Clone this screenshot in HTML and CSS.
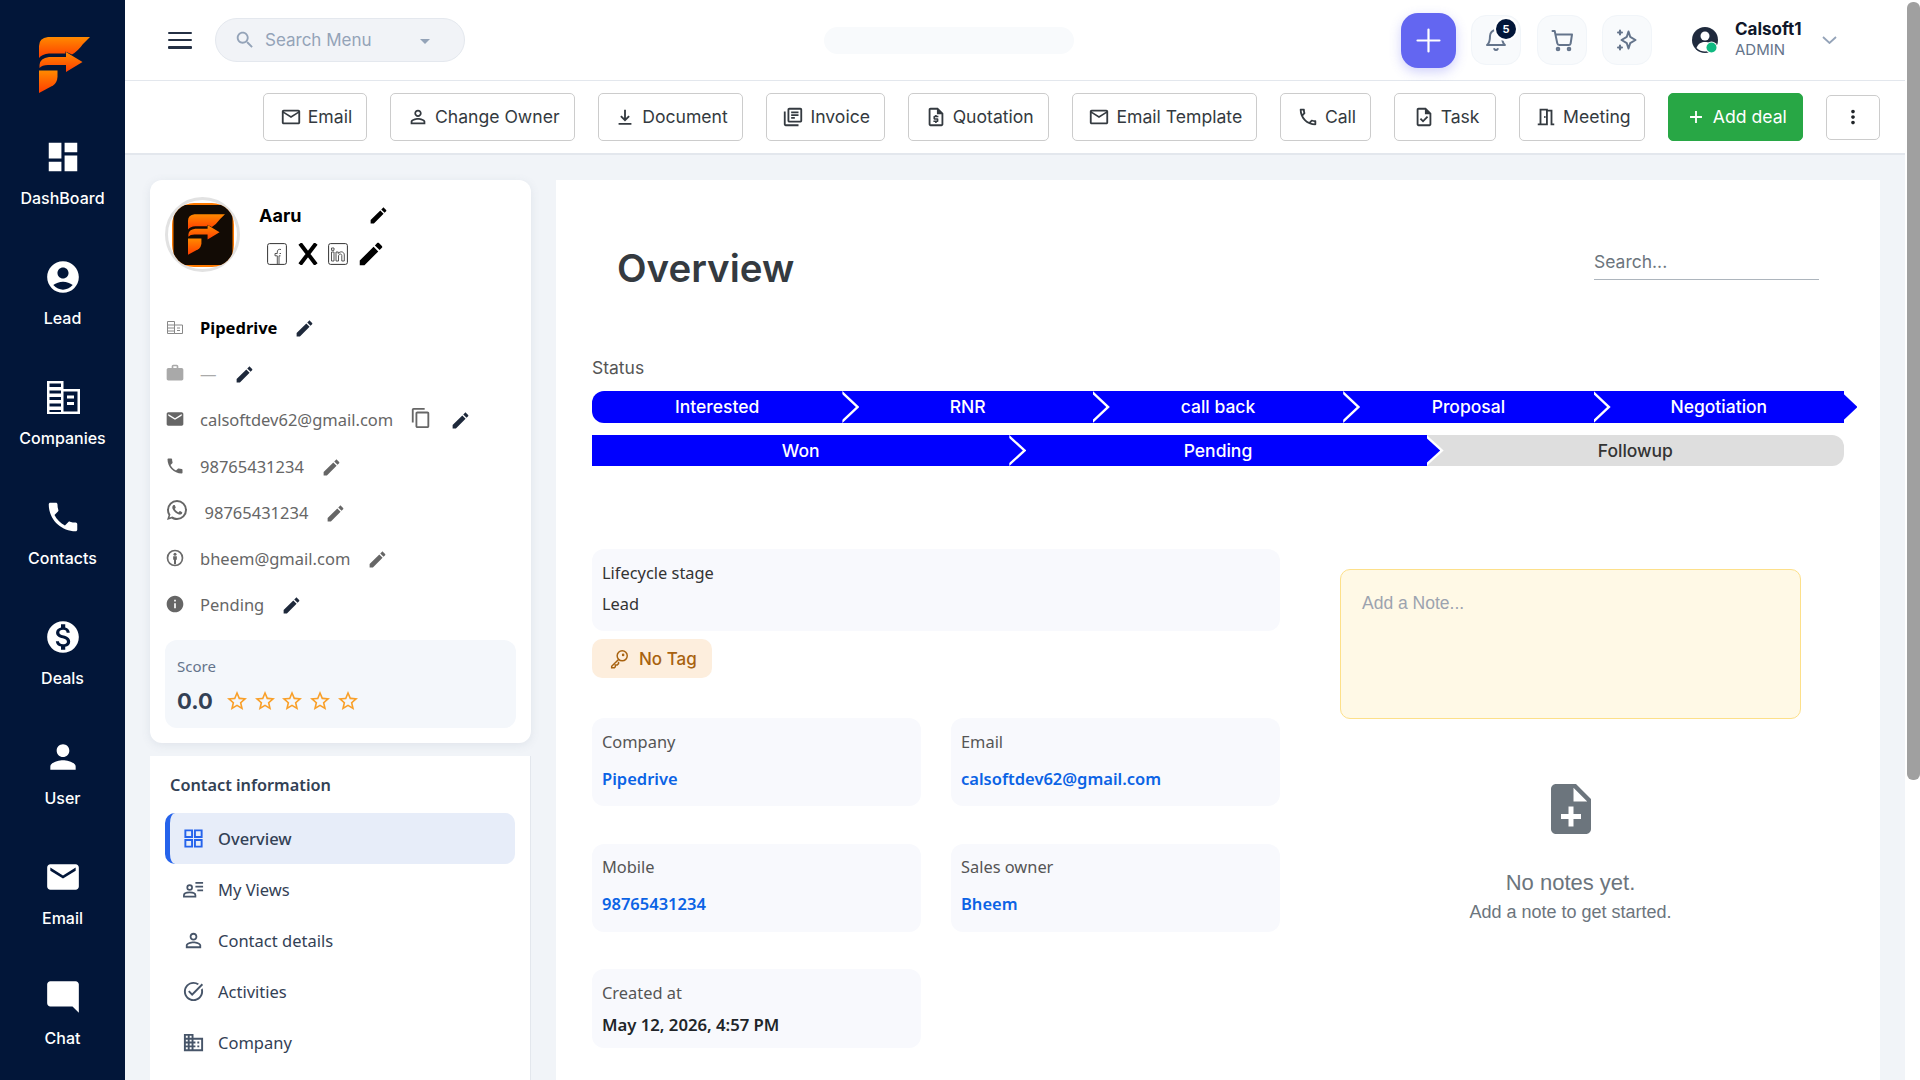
FILE: index.html
```html
<!DOCTYPE html>
<html lang="en">
<head>
<meta charset="utf-8">
<title>Contact - Overview</title>
<link rel="stylesheet" href="styles.css">
</head>
<body>
<svg class="defs" width="0" height="0" aria-hidden="true">
  <defs>
    <linearGradient id="fg" x1="0" y1="0" x2="0" y2="1"><stop offset="0" stop-color="#ff8a00"/><stop offset="1" stop-color="#ff3c00"/></linearGradient>
    <symbol id="logo" viewBox="0 0 51 56">
      <path fill="url(#fg)" d="M51 0H9Q0 1 0 9V21Q3 17 10 16.500H26.500V14.500L33 17.500Q39 14 44 7Z"/>
      <path fill="url(#fg)" d="M0.500 28Q1 21 10 20H27V15L43.500 25L27 35V28H9Q3 28 0.500 31Z"/>
      <path fill="url(#fg)" d="M0 33.500H18.500V40Q18 46 14 48.500L0 56Z"/>
    </symbol>
    <symbol id="pencil" viewBox="0 0 24 24"><path d="M3 17.250V21h3.750L17.810 9.940l-3.750-3.750L3 17.250zM20.710 7.040c.39-.39.39-1.020 0-1.410l-2.340-2.340c-.39-.39-1.020-.39-1.410 0l-1.830 1.830 3.750 3.750 1.830-1.830z"/></symbol>
    <symbol id="mailo" viewBox="0 0 24 24"><path d="M22 6c0-1.100-.9-2-2-2H4c-1.100 0-2 .9-2 2v12c0 1.100.9 2 2 2h16c1.100 0 2-.9 2-2V6zm-2 0l-8 5-8-5h16zm0 12H4V8l8 5 8-5v10z"/></symbol>
    <symbol id="persono" viewBox="0 0 24 24"><path d="M12 5.900c1.160 0 2.100.94 2.100 2.100s-.94 2.100-2.100 2.100S9.900 9.160 9.900 8s.94-2.100 2.100-2.100m0 9c2.970 0 6.100 1.460 6.100 2.100v1.100H5.900V17c0-.64 3.130-2.100 6.100-2.100M12 4C9.790 4 8 5.790 8 8s1.790 4 4 4 4-1.790 4-4-1.790-4-4-4zm0 9c-2.670 0-8 1.340-8 4v3h16v-3c0-2.660-5.330-4-8-4z"/></symbol>
    <symbol id="star" viewBox="0 0 24 24"><path d="M22 9.240l-7.190-.62L12 2 9.190 8.630 2 9.240l5.460 4.730L5.820 21 12 17.270 18.180 21l-1.630-7.030L22 9.240zM12 15.400l-3.760 2.270 1-4.280-3.320-2.880 4.380-.38L12 6.100l1.710 4.040 4.380.38-3.320 2.880 1 4.280L12 15.400z"/></symbol>
    <symbol id="tower" viewBox="0 0 24 24"><path d="M12 7V3H2v18h20V7H12zM6 19H4v-2h2v2zm0-4H4v-2h2v2zm0-4H4V9h2v2zm0-4H4V5h2v2zm4 12H8v-2h2v2zm0-4H8v-2h2v2zm0-4H8V9h2v2zm0-4H8V5h2v2zm10 12h-8v-2h2v-2h-2v-2h2v-2h-2V9h8v10zm-2-8h-2v2h2v-2zm0 4h-2v2h2v-2z"/></symbol>
  </defs>
</svg>
<div class="app">
  <nav class="sidebar">
    <div class="side-logo"><svg class="logo-svg"><use href="#logo"/></svg></div>
    <a class="side-item"><svg class="side-icon" viewBox="0 0 24 24"><path d="M3 13h8V3H3v10zm0 8h8v-6H3v6zm10 0h8V11h-8v10zm0-18v6h8V3h-8z"/></svg><span>DashBoard</span></a>
    <a class="side-item"><svg class="side-icon" viewBox="0 0 24 24"><path d="M12 2C6.480 2 2 6.480 2 12s4.480 10 10 10 10-4.480 10-10S17.520 2 12 2zm0 4c1.930 0 3.500 1.570 3.500 3.500S13.930 13 12 13s-3.500-1.570-3.500-3.500S10.070 6 12 6zm0 14c-2.030 0-4.430-.82-6.140-2.880C7.550 15.800 9.680 15 12 15s4.450.8 6.140 2.120C16.430 19.180 14.030 20 12 20z"/></svg><span>Lead</span></a>
    <a class="side-item"><svg class="side-icon" viewBox="0 0 38 38"><path d="M3 3h16.500v8H36v25H3zM5.500 5.500v3.500h11.500V5.500zm0 7v3h11.500v-3zm0 6.500v3h11.500v-3zm0 6.500v3h11.500v-3zm0 6.500v2h11.500v-2zM19.500 13.500v20h14v-20zm3.500 4h7v3h-7zm0 6.500h7v3h-7z" fill-rule="evenodd"/></svg><span>Companies</span></a>
    <a class="side-item"><svg class="side-icon" viewBox="0 0 24 24"><path d="M6.620 10.790c1.440 2.830 3.760 5.140 6.590 6.590l2.200-2.200c.27-.27.67-.36 1.020-.24 1.120.37 2.330.57 3.570.57.55 0 1 .45 1 1V20c0 .55-.45 1-1 1-9.390 0-17-7.610-17-17 0-.55.45-1 1-1h3.500c.55 0 1 .45 1 1 0 1.250.2 2.450.57 3.570.11.35.03.74-.25 1.020l-2.200 2.200z"/></svg><span>Contacts</span></a>
    <a class="side-item"><svg class="side-icon" viewBox="0 0 24 24"><path d="M12 2C6.480 2 2 6.480 2 12s4.480 10 10 10 10-4.480 10-10S17.520 2 12 2zm1.410 16.090V20h-2.670v-1.930c-1.710-.36-3.160-1.460-3.270-3.400h1.960c.1 1.050.82 1.870 2.650 1.870 1.960 0 2.400-.98 2.400-1.590 0-.83-.44-1.610-2.670-2.140-2.480-.6-4.180-1.620-4.180-3.670 0-1.720 1.390-2.840 3.110-3.210V4h2.670v1.950c1.860.45 2.790 1.860 2.850 3.390H14.300c-.05-1.110-.64-1.870-2.220-1.870-1.500 0-2.400.68-2.400 1.640 0 .84.65 1.390 2.670 1.910s4.180 1.390 4.180 3.910c-.01 1.830-1.380 2.830-3.120 3.160z"/></svg><span>Deals</span></a>
    <a class="side-item"><svg class="side-icon" viewBox="0 0 24 24"><path d="M12 12c2.210 0 4-1.790 4-4s-1.790-4-4-4-4 1.790-4 4 1.790 4 4 4zm0 2c-2.670 0-8 1.340-8 4v2h16v-2c0-2.660-5.330-4-8-4z"/></svg><span>User</span></a>
    <a class="side-item"><svg class="side-icon" viewBox="0 0 24 24"><path d="M20 4H4c-1.100 0-1.990.9-1.990 2L2 18c0 1.100.9 2 2 2h16c1.100 0 2-.9 2-2V6c0-1.100-.9-2-2-2zm0 4l-8 5-8-5V6l8 5 8-5v2z"/></svg><span>Email</span></a>
    <a class="side-item"><svg class="side-icon" viewBox="0 0 24 24"><path d="M4 2h16c1.100 0 2 .9 2 2v18l-4-4H4c-1.100 0-2-.9-2-2V4c0-1.100.9-2 2-2z"/></svg><span>Chat</span></a>
  </nav>

  <div class="main">
    <header class="topbar">
      <button class="burger" aria-label="Menu"><i></i><i></i><i></i></button>
      <div class="menu-search">
        <svg class="menu-search-icon" viewBox="0 0 24 24"><path d="M15.500 14h-.79l-.28-.27C15.410 12.590 16 11.110 16 9.500 16 5.910 13.090 3 9.500 3S3 5.910 3 9.500 5.910 16 9.500 16c1.610 0 3.090-.59 4.230-1.570l.27.28v.79l5 4.990L20.490 19l-4.990-5zm-6 0C7.010 14 5 11.990 5 9.500S7.010 5 9.500 5 14 7.010 14 9.500 11.990 14 9.500 14z"/></svg>
        <span class="menu-search-text">Search Menu</span>
        <i class="menu-caret"></i>
      </div>
      <div class="skeleton"></div>
      <button class="plus-btn" aria-label="Add"><svg viewBox="0 0 24 24"><path d="M12 3.500v17M3.500 12h17"/></svg></button>
      <button class="tool-btn" aria-label="Notifications">
        <svg viewBox="0 0 24 24"><path d="M6 8a6 6 0 0 1 12 0c0 7 3 9 3 9H3s3-2 3-9"/><path d="M10.300 21a1.940 1.940 0 0 0 3.400 0"/></svg>
        <b class="badge">5</b>
      </button>
      <button class="tool-btn" aria-label="Cart"><svg viewBox="0 0 24 24"><circle cx="8" cy="21" r="1.300"/><circle cx="19" cy="21" r="1.300"/><path d="M2.500 3h2.200l2.600 12.400a2 2 0 0 0 2 1.600h9.400a2 2 0 0 0 1.950-1.570L22 6.500H5.500"/></svg></button>
      <button class="tool-btn" aria-label="AI"><svg viewBox="0 0 24 24"><path d="M13.500 3.500l1.700 5.300 5.300 3.200-5.300 3.200-1.700 5.300-1.700-5.300L6.500 12l5.300-3.200z"/><path d="M5 2.500v4M3 4.500h4M5 17.500v4M3 19.500h4"/></svg></button>
      <svg class="user-avatar" viewBox="0 0 26 26"><circle cx="13" cy="13" r="13" fill="#1f2a3d"/><circle cx="13" cy="9" r="4.500" fill="#fff"/><path d="M4.500 21c1.500-4.500 5-6 8.500-6s7 1.500 8.500 6c-2.500 2.500-5.500 3.500-8.500 3.500S7 23.500 4.500 21z" fill="#fff"/><circle cx="19.500" cy="20.500" r="6" fill="#fff"/><circle cx="19.500" cy="20.500" r="5" fill="#10b981"/></svg>
      <div class="user-meta"><strong>Calsoft1</strong><span>ADMIN</span></div>
      <svg class="user-chevron" viewBox="0 0 15 8"><path d="M1 1l6.500 6L14 1"/></svg>
    </header>

    <div class="toolbar">
      <button class="act"><svg viewBox="0 0 24 24"><use href="#mailo"/></svg>Email</button>
      <button class="act"><svg viewBox="0 0 24 24"><use href="#persono"/></svg>Change Owner</button>
      <button class="act"><svg viewBox="0 0 24 24"><path d="M12 4v11M7.500 11l4.500 4.500 4.500-4.500M5 19.500h14" class="stroked"/></svg>Document</button>
      <button class="act"><svg viewBox="0 0 24 24"><path d="M4 6H2v14c0 1.100.9 2 2 2h14v-2H4V6zm16-4H8c-1.100 0-2 .9-2 2v12c0 1.100.9 2 2 2h12c1.100 0 2-.9 2-2V4c0-1.100-.9-2-2-2zm0 14H8V4h12v12zM10 9h8v2h-8zm0 3h4v2h-4zm0-6h8v2h-8z"/></svg>Invoice</button>
      <button class="act"><svg viewBox="0 0 24 24"><path d="M14 2H6c-1.100 0-2 .9-2 2v16c0 1.100.9 2 2 2h12c1.100 0 2-.9 2-2V8l-6-6zM6 20V4h7v5h5v11H6z"/><path d="M11 18.500h1.800v-1h.9c.5 0 .9-.4.9-.9v-2.400c0-.5-.4-.9-.9-.9h-2.800v-1h3.700v-1.600h-1.800v-1H11v1h-.9c-.5 0-.9.4-.9.9v2.400c0 .5.4.9.9.9h2.800v1H9.200v1.600H11z"/></svg>Quotation</button>
      <button class="act"><svg viewBox="0 0 24 24"><use href="#mailo"/></svg>Email Template</button>
      <button class="act"><svg viewBox="0 0 24 24"><path d="M6.540 5c.06.89.21 1.760.45 2.590l-1.200 1.200c-.41-1.200-.67-2.470-.76-3.790h1.510m9.860 12.020c.85.24 1.720.39 2.600.45v1.490c-1.320-.09-2.590-.35-3.800-.75l1.200-1.190M7.500 3H4c-.55 0-1 .45-1 1 0 9.390 7.610 17 17 17 .55 0 1-.45 1-1v-3.490c0-.55-.45-1-1-1-1.240 0-2.450-.2-3.570-.57-.1-.04-.21-.05-.31-.05-.26 0-.51.1-.71.29l-2.200 2.200c-2.830-1.450-5.150-3.760-6.590-6.590l2.200-2.200c.28-.28.36-.67.25-1.020C8.700 6.450 8.500 5.250 8.500 4c0-.55-.45-1-1-1z"/></svg>Call</button>
      <button class="act act-task"><svg viewBox="0 0 24 24"><path d="M14 2H6c-1.100 0-2 .9-2 2v16c0 1.100.9 2 2 2h12c1.100 0 2-.9 2-2V8l-6-6zm4 18H6V4h7v5h5v11zM10.940 18 7.400 14.460l1.410-1.410 2.120 2.120 4.240-4.240 1.410 1.410z"/></svg>Task</button>
      <button class="act act-meeting"><svg viewBox="0 0 24 24"><path d="M14 6v15H3v-2h2V3h9v1h5v15h2v2h-4V6h-3zm-2 13V5H7v14h5zm-2-8h1.500v2H10z"/></svg>Meeting</button>
      <button class="act act-green"><svg viewBox="0 0 24 24"><path d="M12 5.500v13M5.500 12h13" class="stroked"/></svg>Add deal</button>
      <button class="act act-more" aria-label="More"><svg viewBox="0 0 24 24"><path d="M12 8c1.100 0 2-.9 2-2s-.9-2-2-2-2 .9-2 2 .9 2 2 2zm0 2c-1.100 0-2 .9-2 2s.9 2 2 2 2-.9 2-2-.9-2-2-2zm0 6c-1.100 0-2 .9-2 2s.9 2 2 2 2-.9 2-2-.9-2-2-2z"/></svg></button>
    </div>

    <div class="content">
      <aside class="left-col">
        <section class="profile-card">
          <div class="profile-head">
            <div class="avatar">
              <svg class="avatar-svg" viewBox="0 0 62 64">
                <rect x="0" y="0" width="62" height="64" fill="#ff7a00"/>
                <rect x="1.500" y="2" width="59" height="60" fill="#120b05"/>
                <svg x="16" y="11" width="37" height="41"><use href="#logo"/></svg>
              </svg>
            </div>
            <div class="profile-info">
              <div class="name-line"><strong>Aaru</strong><svg class="pen pen-black pen-name"><use href="#pencil"/></svg></div>
              <div class="social-line">
                <svg class="soc" viewBox="0 0 20 22"><rect x=".6" y=".6" width="18.800" height="20.800" rx="2" class="soc-box"/><path d="M14 6.500c-2.500-.6-3.700.4-3.700 2.600v1.400H8v2.300h2.300V21M13.500 12.800h-1.500V21M12.500 10.500H14" class="soc-line"/></svg>
                <svg class="soc soc-x" viewBox="0 0 20 22"><path d="M2 .5l16 21M18 .5L2 21.500" class="soc-x-line"/></svg>
                <svg class="soc" viewBox="0 0 20 22"><rect x=".6" y=".6" width="18.800" height="20.800" rx="2" class="soc-box"/><path d="M3.500 9h2.500v9H3.500zM3.500 5h2.500v2.300H3.500zM8 9h2.300v1.500c1.500-2.500 6-2.300 6 1.500v6h-2.500v-5.500c0-2-3-2-3.300.3V18H8z" class="soc-line"/></svg>
                <svg class="pen pen-black pen-big"><use href="#pencil"/></svg>
              </div>
            </div>
          </div>
          <div class="info-rows">
            <div class="info-row strong"><svg class="ri ri-sm" viewBox="0 0 16 13"><path d="M.5.500h7v12h-7zM7.500 4h8v8.500h-8zM1 4h6M1 7h6M1 10h6M10 7h3M10 9.500h3" class="ri-line"/></svg><span>Pipedrive</span><svg class="pen pen-navy"><use href="#pencil"/></svg></div>
            <div class="info-row"><svg class="ri" viewBox="0 0 24 24"><path d="M20 6h-4V4c0-1.110-.89-2-2-2h-4c-1.110 0-2 .89-2 2v2H4c-1.110 0-1.990.89-1.990 2L2 19c0 1.110.89 2 2 2h16c1.110 0 2-.89 2-2V8c0-1.110-.89-2-2-2zm-6 0h-4V4h4v2z" fill="#a9a9a9"/></svg><span class="dash">—</span><svg class="pen pen-navy"><use href="#pencil"/></svg></div>
            <div class="info-row"><svg class="ri" viewBox="0 0 24 24"><path d="M20 4H4c-1.100 0-1.990.9-1.990 2L2 18c0 1.100.9 2 2 2h16c1.100 0 2-.9 2-2V6c0-1.100-.9-2-2-2zm0 4l-8 5-8-5V6l8 5 8-5v2z"/></svg><span>calsoftdev62@gmail.com</span><svg class="copy" viewBox="0 0 24 24"><path d="M16 1H4c-1.100 0-2 .9-2 2v14h2V3h12V1zm3 4H8c-1.100 0-2 .9-2 2v14c0 1.100.9 2 2 2h11c1.100 0 2-.9 2-2V7c0-1.100-.9-2-2-2zm0 16H8V7h11v14z"/></svg><svg class="pen pen-navy pen-after-copy"><use href="#pencil"/></svg></div>
            <div class="info-row"><svg class="ri" viewBox="0 0 24 24"><path d="M6.620 10.790c1.440 2.830 3.760 5.140 6.590 6.590l2.200-2.200c.27-.27.67-.36 1.020-.24 1.120.37 2.330.57 3.570.57.55 0 1 .45 1 1V20c0 .55-.45 1-1 1-9.390 0-17-7.610-17-17 0-.55.45-1 1-1h3.500c.55 0 1 .45 1 1 0 1.250.2 2.450.57 3.570.11.35.03.74-.25 1.020l-2.200 2.200z"/></svg><span>98765431234</span><svg class="pen pen-grey"><use href="#pencil"/></svg></div>
            <div class="info-row wa"><svg class="ri ri-wa" viewBox="0 0 24 24"><path d="M16.750 13.960c.25.13.41.2.46.3.06.11.04.61-.21 1.180-.2.56-1.240 1.100-1.700 1.120-.46.02-.47.36-2.960-.73-2.490-1.090-3.990-3.750-4.110-3.920-.12-.17-.96-1.380-.92-2.610.05-1.220.69-1.800.95-2.040.24-.26.51-.29.68-.26h.47c.15 0 .36-.06.55.45l.69 1.870c.06.13.1.28.01.44l-.27.41-.39.42c-.12.12-.26.25-.12.5.12.26.62 1.090 1.320 1.780.91.88 1.710 1.170 1.950 1.300.24.14.39.12.54-.04l.81-.94c.19-.25.35-.19.58-.11l1.670.88M12 2a10 10 0 0 1 10 10 10 10 0 0 1-10 10c-1.970 0-3.800-.57-5.350-1.550L2 22l1.550-4.650A9.969 9.969 0 0 1 2 12 10 10 0 0 1 12 2m0 2a8 8 0 0 0-8 8c0 1.720.54 3.310 1.460 4.610L4.500 19.500l2.890-.96A7.950 7.950 0 0 0 12 20a8 8 0 0 0 8-8 8 8 0 0 0-8-8z"/></svg><span>98765431234</span><svg class="pen pen-grey"><use href="#pencil"/></svg></div>
            <div class="info-row"><svg class="ri" viewBox="0 0 24 24"><circle cx="12" cy="12" r="9" fill="none" stroke="#6b6b6b" stroke-width="2"/><circle cx="12" cy="7.500" r="1.800"/><path d="M9.800 10h4.400v4h-1v5.500h-2.400V14h-1z"/></svg><span>bheem@gmail.com</span><svg class="pen pen-grey"><use href="#pencil"/></svg></div>
            <div class="info-row"><svg class="ri" viewBox="0 0 24 24"><path d="M12 2C6.480 2 2 6.480 2 12s4.480 10 10 10 10-4.480 10-10S17.520 2 12 2zm1 15h-2v-6h2v6zm0-8h-2V7h2v2z"/></svg><span>Pending</span><svg class="pen pen-navy"><use href="#pencil"/></svg></div>
          </div>
          <div class="score-box">
            <div class="score-label">Score</div>
            <div class="score-line">
              <b>0.0</b>
              <div class="stars">
                <svg class="star"><use href="#star"/></svg><svg class="star"><use href="#star"/></svg><svg class="star"><use href="#star"/></svg><svg class="star"><use href="#star"/></svg><svg class="star"><use href="#star"/></svg>
              </div>
            </div>
          </div>
        </section>

        <section class="contact-card">
          <h3>Contact information</h3>
          <a class="c-item active"><svg viewBox="0 0 24 24"><path d="M3.500 3.500h7v7h-7zM13.500 3.500h7v7h-7zM3.500 13.500h7v7h-7zM13.500 13.500h7v7h-7z" class="grid-stroke"/></svg>Overview</a>
          <a class="c-item"><svg viewBox="0 0 24 24"><circle cx="8" cy="10" r="2.500" class="c-stroke"/><path d="M2 19.500v-1.500c0-2 3-3 6-3s6 1 6 3v1.500z" class="c-stroke"/><path d="M14 5h8M14 9h8M16 13h6" class="c-stroke"/></svg>My Views</a>
          <a class="c-item"><svg viewBox="0 0 24 24"><use href="#persono"/></svg>Contact details</a>
          <a class="c-item"><svg viewBox="0 0 24 24"><path d="M22 5.180 10.590 16.600l-4.240-4.240 1.410-1.410 2.830 2.830 10-10L22 5.180zm-2.210 5.040c.13.570.21 1.170.21 1.780 0 4.420-3.580 8-8 8s-8-3.580-8-8 3.580-8 8-8c1.580 0 3.040.46 4.280 1.250l1.440-1.440A9.900 9.900 0 0 0 12 2C6.480 2 2 6.480 2 12s4.480 10 10 10 10-4.480 10-10c0-1.190-.22-2.330-.6-3.390l-1.610 1.610z"/></svg>Activities</a>
          <a class="c-item"><svg viewBox="0 0 24 24"><use href="#tower"/></svg>Company</a>
        </section>
      </aside>

      <section class="panel">
        <div class="panel-head">
          <h1>Overview</h1>
          <div class="panel-search">Search...</div>
        </div>
        <div class="status-label">Status</div>
        <div class="pipe pipe-five">
          <div class="seg seg-first">Interested</div>
          <div class="seg">RNR</div>
          <div class="seg">call back</div>
          <div class="seg">Proposal</div>
          <div class="seg seg-last">Negotiation</div>
        </div>
        <div class="pipe pipe-three">
          <div class="seg">Won</div>
          <div class="seg">Pending</div>
          <div class="seg seg-grey">Followup</div>
        </div>

        <div class="detail-grid">
          <div class="detail-left">
            <div class="field field-life"><div class="f-label">Lifecycle stage</div><div class="f-plain">Lead</div></div>
            <div class="tag"><svg viewBox="0 0 24 24"><circle cx="15.500" cy="8.500" r="5.500"/><path d="M11.500 12.500L4 20v1.500h3l1-1v-2h2l1.500-1.500v-2"/><circle cx="16.500" cy="7.500" r=".6"/></svg>No Tag</div>
            <div class="fields">
              <div class="field"><div class="f-label">Company</div><div class="f-link">Pipedrive</div></div>
              <div class="field"><div class="f-label">Email</div><div class="f-link">calsoftdev62@gmail.com</div></div>
              <div class="field"><div class="f-label">Mobile</div><div class="f-link">98765431234</div></div>
              <div class="field"><div class="f-label">Sales owner</div><div class="f-link">Bheem</div></div>
              <div class="field field-date"><div class="f-label">Created at</div><div class="f-date">May 12, 2026, 4:57 PM</div></div>
            </div>
          </div>
          <div class="detail-right">
            <div class="note-box">Add a Note...</div>
            <svg class="note-icon" viewBox="0 0 24 24"><path d="M14 2H6c-1.100 0-1.990.9-1.990 2L4 20c0 1.100.89 2 1.990 2H18c1.100 0 2-.9 2-2V8l-6-6zm2 14h-3v3h-2v-3H8v-2h3v-3h2v3h3v2zm-3-7V3.500L18.500 9H13z"/></svg>
            <div class="note-empty">No notes yet.</div>
            <div class="note-sub">Add a note to get started.</div>
          </div>
        </div>
      </section>
    </div>
  </div>

  <div class="scroll-track"><div class="scroll-thumb"></div></div>
</div>
</body>
</html>
```

FILE: styles.css
```css
* { box-sizing: border-box; }
html, body { margin: 0; height: 1080px; overflow: hidden; }
body { font-family: Inter, "Noto Sans", sans-serif; font-size: 17px; color: #334155; background: #fff; }
button { font: inherit; cursor: pointer; }
.defs { position: absolute; }
.app { display: flex; height: 1080px; overflow: hidden; }

/* sidebar */
.sidebar { width: 125px; flex: none; background: #021639; color: #fff; overflow: hidden; }
.side-logo { height: 130px; padding: 37px 0 0 39px; }
.logo-svg { display: block; width: 51px; height: 56px; }
.side-item { display: flex; flex-direction: column; align-items: center; height: 120px; padding-top: 8px; }
.side-icon { width: 38px; height: 38px; fill: #fff; flex: none; }
.side-item span { margin-top: 12px; height: 20px; line-height: 20px; font-size: 16px; font-weight: 500; }

/* main */
.main { width: 1780px; flex: none; display: flex; flex-direction: column; background: #f1f4f8; }
.topbar { height: 81px; flex: none; display: flex; align-items: center; background: #fff; border-bottom: 1px solid #e3e7ed; padding: 0 68px 0 43px; }
.burger { width: 24px; height: 17px; padding: 0; border: 0; background: none; display: flex; flex-direction: column; justify-content: space-between; flex: none; }
.burger i { display: block; height: 2.500px; background: #243044; border-radius: 1px; }
.menu-search { margin-left: 23px; width: 250px; height: 44px; flex: none; display: flex; align-items: center; border-radius: 22px; background: #f1f3f7; border: 1px solid #e4e8ee; padding-left: 18px; }
.menu-search-icon { width: 22px; height: 22px; fill: #94a3b8; flex: none; }
.menu-search-text { margin-left: 9px; font-size: 17px; color: #94a3b8; }
.menu-caret { margin-left: auto; margin-right: 34px; width: 0; height: 0; border-left: 5.500px solid transparent; border-right: 5.500px solid transparent; border-top: 5.500px solid #94a3b8; margin-top: 3px; }
.skeleton { margin-left: 359px; width: 250px; height: 27px; flex: none; background: #f8fafc; border-radius: 14px; }
.plus-btn { margin-left: auto; width: 55px; height: 55px; flex: none; border: 0; border-radius: 17px; background: #6366f1; box-shadow: 0 4px 12px rgba(99,102,241,.3); display: flex; align-items: center; justify-content: center; padding: 0; }
.plus-btn svg { width: 31px; height: 31px; fill: none; stroke: #fff; stroke-width: 1.700; stroke-linecap: round; }
.tool-btn { position: relative; margin-left: 15.500px; width: 50px; height: 50px; flex: none; padding: 0; border-radius: 15px; border: 1px solid #f1f5f9; background: #f8fafc; display: flex; align-items: center; justify-content: center; }
.tool-btn svg { width: 24px; height: 24px; fill: none; stroke: #64748b; stroke-width: 2; stroke-linecap: round; stroke-linejoin: round; }
.badge { position: absolute; top: 3px; right: 4px; width: 20px; height: 20px; border-radius: 50%; background: #021639; color: #fff; font-size: 11px; font-weight: 700; line-height: 20px; text-align: center; box-shadow: 0 0 0 2px #fff; }
.user-avatar { margin-left: 40px; width: 26px; height: 26px; flex: none; }
.user-meta { margin-left: 17px; display: flex; flex-direction: column; width: 87px; flex: none; margin-top: -3px; }
.user-meta strong { font-size: 17px; line-height: 22px; font-weight: 700; color: #0f172a; }
.user-meta span { font-size: 15px; line-height: 19px; color: #64748b; }
.user-chevron { width: 15px; height: 8px; fill: none; stroke: #94a3b8; stroke-width: 1.800; flex: none; }

.toolbar { height: 74px; flex: none; display: flex; align-items: center; justify-content: flex-end; gap: 23px; background: #fff; border-bottom: 2px solid #e3e7ed; padding-right: 25px; }
.act { height: 48px; flex: none; display: flex; align-items: center; gap: 6px; padding: 0 14px 1px 15.700px; background: #fff; border: 1px solid #ccc; border-radius: 5px; color: #343a40; font-size: 17.600px; }
.act svg { width: 22px; height: 22px; fill: #343a40; flex: none; }
.stroked { fill: none; stroke: #343a40; stroke-width: 2; }
.act-task { padding-left: 17.500px; padding-right: 15.500px; }
.act-meeting { padding-left: 15px; padding-right: 13.500px; }
.act-green { background: #28a745; border-color: #28a745; color: #fff; padding-right: 15.200px; padding-left: 15.700px; }
.act-green .stroked { stroke: #fff; }
.act-more { width: 54px; height: 45px; padding: 0; justify-content: center; }
.act-more svg { width: 22px; height: 22px; fill: #212529; }

.content { flex: 1; min-height: 0; display: flex; align-items: flex-start; padding: 25px 25px 0; gap: 25px; overflow: hidden; }
.left-col { width: 381px; flex: none; font-family: "Noto Sans", Inter, sans-serif; }
.profile-card { height: 563px; background: #fff; border-radius: 12px; box-shadow: 0 2px 10px rgba(100,116,139,.12); padding: 17px 15px 0; }
.profile-head { display: flex; height: 108.500px; }
.avatar { width: 75px; height: 75px; flex: none; border-radius: 50%; border: 3px solid #e2e2e2; display: flex; align-items: center; justify-content: center; background: #fff; }
.avatar-svg { display: block; width: 62px; height: 64px; border-radius: 22px; flex: none; }
.profile-info { margin-left: 19px; flex: 1; }
.name-line { display: flex; align-items: center; height: 36px; }
.name-line strong { font-family: Inter, sans-serif; font-size: 18px; font-weight: 700; color: #000; width: 106px; }
.pen { flex: none; display: block; }
.pen-name { width: 21px; height: 21px; margin-left: 2.500px; }
.pen-black { fill: #000; }
.pen-navy { fill: #1e293b; width: 21px; height: 21px; margin-left: 17px; }
.pen-grey { fill: #666; width: 21px; height: 21px; margin-left: 17px; }
.social-line { display: flex; align-items: center; margin-top: 9px; height: 24px; padding-left: 8px; }
.soc { width: 20px; height: 22px; flex: none; margin-right: 10.500px; }
.soc-box { fill: none; stroke: #333; stroke-width: 1; }
.soc-line { fill: none; stroke: #444; stroke-width: .9; }
.soc-x-line { fill: none; stroke: #000; stroke-width: 4; }
.pen-big { width: 30px; height: 30px; margin-left: -3px; }
.info-rows { display: flex; flex-direction: column; }
.info-row { height: 46.200px; display: flex; align-items: center; color: #666; font-size: 16.500px; }
.info-row span { padding-bottom: 2px; }
.info-row.strong span { color: #000; font-weight: 700; }
.ri { width: 20px; height: 20px; fill: #666; flex: none; margin-right: 15px; margin-bottom: 3px; }
.ri-sm { width: 16px; height: 13px; margin-left: 2px; margin-right: 17px; }
.ri-line { fill: none; stroke: #888; stroke-width: 1; }
.ri-wa { width: 24px; height: 24px; margin-right: 15.500px; margin-bottom: 6px; }
.dash { color: #aaa; }
.copy { width: 22px; height: 22px; fill: #666; flex: none; margin-left: 17px; margin-bottom: 6px; }
.pen-after-copy { margin-left: 18px; margin-bottom: 1px; }
.score-box { margin-top: 11.500px; height: 88px; background: #f4f7fb; border-radius: 12px; padding: 16px 12px 0; }
.score-label { font-size: 15px; line-height: 20px; color: #64748b; }
.score-line { display: flex; align-items: center; margin-top: 10px; height: 30px; }
.score-line b { font-family: Inter, sans-serif; font-size: 22px; font-weight: 700; color: #334155; width: 47px; }
.stars { display: flex; gap: 3.700px; margin-left: 1px; margin-bottom: 1px; }
.star { width: 24px; height: 24px; fill: #f9a02a; flex: none; }

.contact-card { margin-top: 13px; height: 340px; background: #fff; border-right: 1px solid #e3e7ed; padding: 16px 15px 0; }
.contact-card h3 { margin: 0 0 14.500px 5px; font-size: 16.300px; line-height: 26px; font-weight: 600; color: #334155; }
.c-item { height: 51.200px; display: flex; align-items: center; padding-left: 16.500px; color: #334155; font-size: 16.500px; }
.c-item svg { width: 23px; height: 23px; fill: #475569; flex: none; margin-right: 13.500px; }
.c-item.active { background: #e7edf9; border-left: 5px solid #2563eb; border-radius: 10px; padding-left: 11.500px; font-weight: 500; }
.grid-stroke { fill: none; stroke: #2563eb; stroke-width: 2; }
.c-stroke { fill: none; stroke: #475569; stroke-width: 1.800; }

/* panel */
.panel { flex: 1; height: 1000px; background: #fff; padding: 64px 0 0 36px; }
.panel-head { display: flex; align-items: flex-start; }
.panel-head h1 { margin: 0 0 0 25px; font-size: 38.500px; line-height: 48px; font-weight: 600; color: #343a40; }
.panel-search { margin: 2px 61px 0 auto; width: 225px; height: 34px; line-height: 31px; border-bottom: 1px solid #adb5bd; color: #6c757d; font-size: 17.500px; }
.status-label { margin-top: 66px; line-height: 20px; color: #555; font-size: 17.500px; }
.pipe { display: grid; width: 1252px; }
.pipe-five { grid-template-columns: repeat(5, 1fr); margin-top: 13px; height: 32px; }
.pipe-five .seg { padding-bottom: 1px; }
.pipe-three { grid-template-columns: repeat(3, 1fr); margin-top: 12px; height: 31px; }
.seg { position: relative; display: flex; align-items: center; justify-content: center; background: #00f; color: #fff; font-size: 17.500px; font-weight: 500; }
.seg::before, .seg::after { content: ""; position: absolute; top: 0; bottom: 0; width: 17px; clip-path: polygon(0 0, 100% 50%, 0 100%); }
.seg::before { left: 100%; background: #fff; z-index: 1; }
.seg::after { left: calc(100% - 3.500px); background: #00f; z-index: 2; }
.seg-first { border-radius: 12px 0 0 12px; }
.seg-last::before { display: none; }
.seg-grey { background: #dedede; color: #333; border-radius: 0 12px 12px 0; }
.seg-grey::before, .seg-grey::after { display: none; }

.detail-grid { display: grid; grid-template-columns: 688px 461px; column-gap: 60px; margin-top: 83px; }
.field { background: #f8f9fd; border-radius: 12px; padding: 0 10px; height: 88px; font-family: "Noto Sans", Inter, sans-serif; }
.f-label { color: #555; font-size: 16.400px; line-height: 24px; }
.f-plain { color: #333; font-size: 16.400px; line-height: 24px; margin-top: 7px; }
.f-link { color: #0b63e5; font-size: 16.500px; font-weight: 600; line-height: 24px; margin-top: 13px; }
.f-date { color: #212529; font-size: 16.700px; font-weight: 600; line-height: 24px; margin-top: 8px; }
.field-life { height: 82px; padding-top: 11.500px; }
.field-life .f-label { color: #333; }
.tag { margin-top: 8px; width: 120px; height: 39px; display: flex; align-items: center; padding-left: 16px; background: #fdeedd; border-radius: 10px; color: #a8620f; font-size: 17px; font-weight: 500; }
.tag svg { width: 22px; height: 22px; fill: none; stroke: #a8620f; stroke-width: 1.600; margin-right: 9px; flex: none; }
.fields { margin-top: 40px; display: grid; grid-template-columns: 329px 329px; column-gap: 30px; row-gap: 37.500px; }
.fields .field { padding-top: 11.500px; }
.field-date { height: 79px; }
.detail-right { display: flex; flex-direction: column; align-items: center; font-family: "Liberation Sans", Arial, sans-serif; padding-top: 20px; }
.note-box { width: 100%; height: 150px; background: #fff9e6; border: 1px solid #fde08a; border-radius: 10px; padding: 22px 21px; font-size: 17.500px; line-height: 22px; color: #9ca3af; }
.note-icon { margin-top: 60px; width: 60px; height: 60px; fill: #6c757d; flex: none; }
.note-empty { margin-top: 30px; font-size: 22px; line-height: 28px; color: #6c757d; }
.note-sub { margin-top: 4px; font-size: 18px; line-height: 22px; color: #6c757d; }

.scroll-track { width: 15px; flex: none; background: #fff; padding: 2px 0 0 2px; }
.scroll-thumb { width: 13px; height: 778px; background: #a0a0a0; border-radius: 6px; }
```
